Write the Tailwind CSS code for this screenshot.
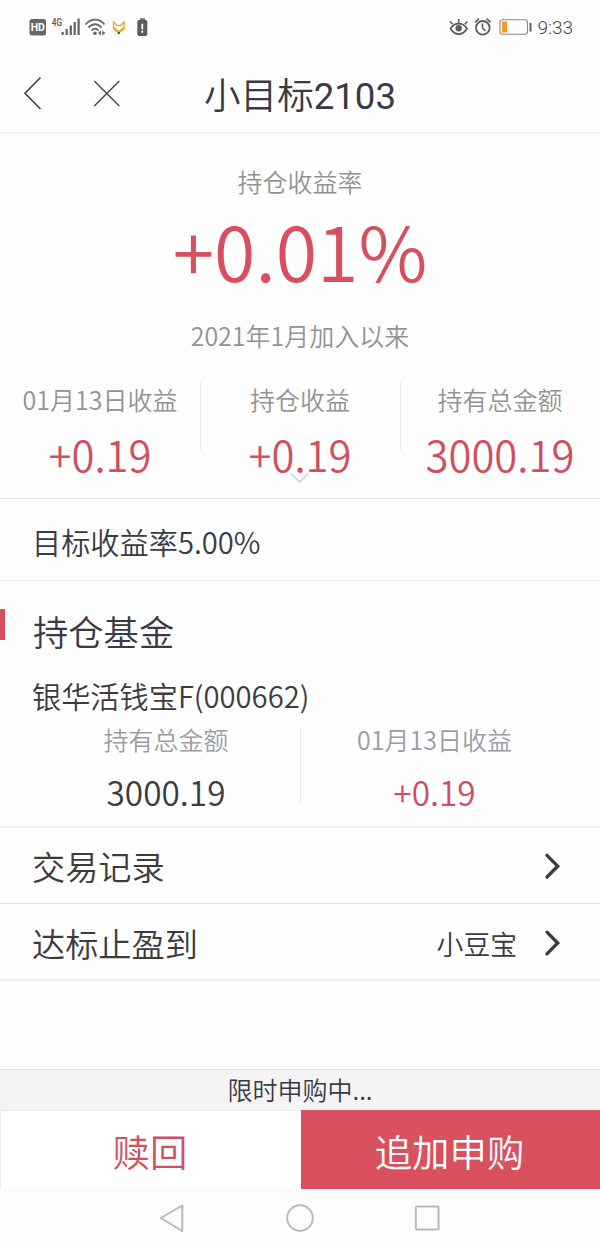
<!DOCTYPE html>
<html lang="zh-CN">
<head>
<meta charset="utf-8">
<title>小目标2103</title>
<script src="https://cdn.jsdelivr.net/npm/@tailwindcss/browser@4"></script>
</head>
<body class="bg-white">
<div class="flex h-[1247px] w-[600px] flex-col overflow-hidden bg-[#fefefe] font-['Noto_Sans_CJK_SC',sans-serif] font-[350] text-[#3a3a46]">

  <!-- Status bar -->
  <div class="flex h-[54px] shrink-0 items-center justify-between pr-[27px] pl-[29px]">
    <svg class="h-[54px] w-[122px]" viewBox="29 0 122 54" fill="none">
      <rect x="29.5" y="19" width="16.5" height="16.5" rx="2.5" fill="#666"/>
      <text x="37.8" y="31.3" text-anchor="middle" font-family="Roboto, sans-serif" font-weight="700" font-size="10.5" fill="#fff">HD</text>
      <text x="51.8" y="26" font-family="Roboto, sans-serif" font-weight="500" font-size="10" textLength="10.2" lengthAdjust="spacingAndGlyphs" fill="#555">4G</text>
      <path d="M62.6 32v3M66.7 29v6M70.8 25.500v9.500M74.700 22v13M78.600 18.500v16.500" stroke="#666" stroke-width="2.300"/>
      <path d="M85.500 24.500c5.500-6.500 14-6.500 19 0M88.500 27.700c4-4.600 9.500-4.600 13 0M91.500 30.500c2.300-2.500 5-2.500 7 0" stroke="#666" stroke-width="1.800"/>
      <circle cx="95" cy="33.300" r="1.800" fill="#666"/>
      <path d="M101 30.500v5l-3-2.500zM102.300 30.500v5l3-2.500z" fill="#666"/>
      <path d="M113.500 21.500l3.200 4h4.200l3.200-4v7.500l-5.300 4-5.300-4zM113.800 27.500l5 4.300 5-4.300" stroke="#f0a826" stroke-width="1.300" stroke-linejoin="round"/>
      <circle cx="118.800" cy="33" r="1.100" fill="#333"/>
      <path d="M140 18.200h5v2h-5z" fill="#777"/>
      <rect x="137.300" y="20" width="10" height="16" rx="1.800" fill="#5c5c5c"/>
      <path d="M142.300 23.800v5.700M142.300 30.700v2" stroke="#fff" stroke-width="1.700"/>
    </svg>
    <div class="flex items-center">
      <svg class="h-[54px] w-[85px]" viewBox="448 0 85 54" fill="none" stroke="#5c5c5c">
        <path d="M450.500 28.500c4.500-6.500 12-6.500 16.500 0c-4.500 7.500-12 7.500-16.500 0z" stroke-width="1.800"/>
        <circle cx="458.700" cy="28.300" r="3.200" fill="#5c5c5c" stroke="none"/>
        <path d="M458.700 19v4M450 21.500l2.600 2.700M467.300 21.500l-2.600 2.700" stroke-width="1.600"/>
        <circle cx="482.800" cy="27.800" r="6.800" stroke-width="1.800"/>
        <path d="M482.500 23.500v4.500l3 2.800M475 22.300l4-3.600M490.600 22.300l-4-3.600" stroke-width="1.600"/>
        <rect x="500" y="19.700" width="27.500" height="14.600" rx="2.500" stroke="#888" stroke-width="1.100"/>
        <rect x="502" y="21.500" width="5" height="11" fill="#f79a1e" stroke="none"/>
        <path d="M530.500 23v8.500" stroke-width="2"/>
      </svg>
      <span class="ml-1 pt-px font-[Roboto] text-[19px] leading-[54px] font-light text-[#444]">9:33</span>
    </div>
  </div>

  <!-- Title bar -->
  <header class="grid h-[80px] shrink-0 grid-cols-[200px_200px_200px] border-b-2 border-[#f2f2f2]">
    <svg class="h-[78px] w-[140px]" viewBox="0 54 140 78" fill="none" stroke="#3f3f4c">
      <path d="M40.500 77.500L25 93.300L40.500 109" stroke-width="1.600"/>
      <path d="M94.300 81l25 25M119.300 81l-25 25" stroke-width="1.300"/>
    </svg>
    <h1 class="pt-px text-center text-[36.600px] leading-[78px] font-[350] whitespace-nowrap text-[#3a3a46]">小目标<span class="font-[Roboto] font-normal">2103</span></h1>
  </header>

  <!-- Return summary -->
  <section class="relative flex h-[365px] shrink-0 flex-col border-b border-[#e6e6e6] pt-[28px] text-center text-[#939393]">
    <p class="text-[25px] leading-[38px]">持仓收益率</p>
    <p class="text-[75.300px] leading-[100px] text-[#d85060]">+0.01%</p>
    <p class="text-[25px] leading-[71px]">2021年1月加入以来</p>
    <div class="mt-[11px] grid grid-cols-[201px_200px_199px]">
      <div class="flex h-[68px] flex-col border-r border-[#ececec]">
        <span class="text-[25px] leading-[34px]">01月13日收益</span>
        <span class="text-[41.800px] leading-[76px] text-[#cf5161]">+0.19</span>
      </div>
      <div class="flex h-[68px] flex-col border-r border-[#ececec] pr-px">
        <span class="text-[25px] leading-[34px]">持仓收益</span>
        <span class="text-[41.800px] leading-[76px] text-[#cf5161]">+0.19</span>
      </div>
      <div class="flex h-[68px] flex-col pr-px">
        <span class="text-[25px] leading-[34px]">持有总金额</span>
        <span class="text-[41.800px] leading-[76px] text-[#cf5161]">3000.19</span>
      </div>
    </div>
    <svg class="absolute bottom-[14px] left-[289px] h-3 w-[22px]" viewBox="0 0 22 12" fill="none" stroke="#c9c9d6" stroke-width="1.300"><path d="M2 1.500L10.700 10L19.400 1.500"/></svg>
  </section>

  <!-- Target -->
  <section class="h-[82px] shrink-0 border-b border-[#e9e9e9] pt-0.5 pl-8">
    <p class="text-[29.200px] leading-[81px]">目标收益率5.00%</p>
  </section>

  <!-- Holdings -->
  <section class="flex h-[247px] shrink-0 flex-col border-b-2 border-[#f0f0f0] pt-[28px]">
    <div class="flex h-[42px]">
      <span class="h-[31px] w-[5px] bg-[#d85060]"></span>
      <h2 class="pt-px pl-7 text-[35.300px] leading-[42px] font-[350]">持仓基金</h2>
    </div>
    <p class="mt-6 h-[53px] pl-8 text-[29.200px] leading-[40px] text-[#3c3c3c]">银华活钱宝F(000662)</p>
    <div class="grid h-[77px] grid-cols-[301px_299px] text-center">
      <div class="flex h-[77px] flex-col border-r border-[#ececec] pl-8">
        <span class="text-[25px] leading-[22px] text-[#9c9ca7]">持有总金额</span>
        <span class="text-[33.400px] leading-[84px] text-[#3c3c3c]">3000.19</span>
      </div>
      <div class="flex h-[77px] flex-col pr-8">
        <span class="text-[25px] leading-[22px] text-[#9c9ca7]">01月13日收益</span>
        <span class="text-[33.400px] leading-[84px] text-[#d04e5e]">+0.19</span>
      </div>
    </div>
  </section>

  <!-- Links -->
  <a class="flex h-[76px] shrink-0 items-center justify-between border-b border-[#e6e6e6] pr-[38px] pl-8">
    <span class="text-[33.200px] leading-[75px] text-[#3c3c3c]">交易记录</span>
    <svg class="h-[28px] w-[18px]" viewBox="0 0 18 28" fill="none" stroke="#3a3a46" stroke-width="3.300" stroke-linecap="round"><path d="M3 3.300L13.700 14.200L3 25"/></svg>
  </a>
  <a class="flex h-[77px] shrink-0 items-center border-b-2 border-[#f0f0f0] pr-[38px] pl-8">
    <span class="grow pt-0.5 text-[33.200px] leading-[73px] text-[#3c3c3c]">达标止盈到</span>
    <span class="mr-[27px] pt-1 text-[26.800px] leading-[71px]">小豆宝</span>
    <svg class="mt-0.5 h-[28px] w-[18px]" viewBox="0 0 18 28" fill="none" stroke="#3a3a46" stroke-width="3.300" stroke-linecap="round"><path d="M3 3.200L13.700 14L3 24.800"/></svg>
  </a>

  <!-- Footer actions -->
  <div class="mt-auto h-[41px] shrink-0 border-t border-[#e4e4e4] bg-[#f4f4f4] text-center text-[25px] leading-[39px]">限时申购中...</div>
  <div class="grid h-[79px] shrink-0 grid-cols-[301px_299px] text-center text-[37.400px]">
    <button class="border-t border-l border-[#ebebeb] bg-white pt-0.5 pr-0.5 leading-[75px] font-[350] text-[#cf5161]">赎回</button>
    <button class="bg-[#d9505f] pt-1 pr-0.5 leading-[75px] font-[350] text-white">追加申购</button>
  </div>

  <!-- System navigation -->
  <nav class="h-[58px] shrink-0 bg-[#fcfcfc]">
    <svg class="h-[58px] w-[600px]" viewBox="0 1189 600 58" fill="none" stroke="#b9b9b9" stroke-width="1.900" stroke-linejoin="round">
      <path d="M182.300 1205.500v25.500L160.700 1218z"/>
      <circle cx="300" cy="1218" r="12.800"/>
      <rect x="415.800" y="1206.500" width="22.800" height="23" rx="1"/>
    </svg>
  </nav>
</div>
</body>
</html>
